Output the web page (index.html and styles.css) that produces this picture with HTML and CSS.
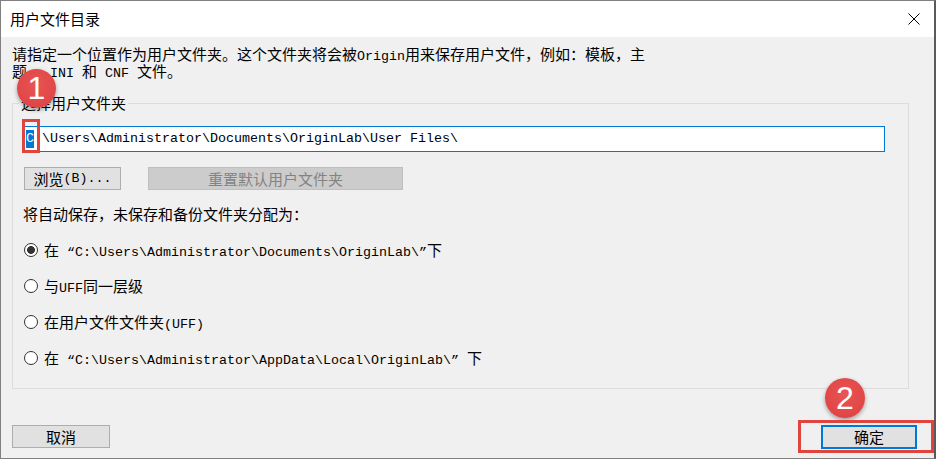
FILE: index.html
```html
<!DOCTYPE html>
<html lang="zh-CN">
<head>
<meta charset="utf-8">
<title>用户文件目录</title>
<link rel="stylesheet" href="styles.css">
</head>
<body>
<div class="window">
  <div class="titlebar">
    <span class="title">用户文件目录</span>
    <svg class="close" width="12" height="12" viewBox="0 0 12 12"><path d="M0.5 0.5 L11.5 11.5 M11.5 0.5 L0.5 11.5" stroke="#000" stroke-width="1" fill="none"/></svg>
  </div>
  <div class="content">
    <div class="desc">请指定一个位置作为用户文件夹。这个文件夹将会被<span class="m">Origin</span>用来保存用户文件，例如：模板，主<br>题、<span class="m"> INI </span>和<span class="m"> CNF </span>文件。</div>
    <fieldset class="group">
      <legend class="legend">选择用户文件夹</legend>
      <div class="pathbox"><span class="m"><span class="sel">C</span>:\Users\Administrator\Documents\OriginLab\User Files\</span></div>
      <div class="btnrow">
        <button class="btn browse">浏览<span class="m">(B)...</span></button>
        <button class="btn reset" disabled>重置默认用户文件夹</button>
      </div>
      <div class="label">将自动保存，未保存和备份文件夹分配为：</div>
      <div class="radios">
        <label class="radio"><input type="radio" name="loc" checked><span>在<span class="m"> “C:\Users\Administrator\Documents\OriginLab\”</span>下</span></label>
        <label class="radio"><input type="radio" name="loc"><span>与<span class="m">UFF</span>同一层级</span></label>
        <label class="radio"><input type="radio" name="loc"><span>在用户文件文件夹<span class="m">(UFF)</span></span></label>
        <label class="radio"><input type="radio" name="loc"><span>在<span class="m"> “C:\Users\Administrator\AppData\Local\OriginLab\” </span>下</span></label>
      </div>
    </fieldset>
    <div class="footer">
      <button class="btn cancel">取消</button>
      <button class="btn ok">确定</button>
    </div>
  </div>
  <div class="badge b1">1</div>
  <div class="mark m1"></div>
  <div class="badge b2">2</div>
  <div class="mark m2"></div>
</div>
</body>
</html>
```
FILE: styles.css
```css
html, body {
  margin: 0;
  padding: 0;
  background: #f0f0f0;
}
body {
  font-family: "Noto Sans CJK SC", "Noto Sans", sans-serif;
  font-size: 15px;
  line-height: 16px;
  color: #000;
}
.m {
  font-family: "Liberation Mono", "Noto Sans CJK SC", monospace;
  font-size: 13.333px;
  line-height: 12px;
  white-space: pre;
}
.window {
  position: relative;
  width: 936px;
  height: 459px;
  box-sizing: border-box;
  border: 1px solid #808080;
  border-right: 2px solid #5a5a5a;
  background: #f0f0f0;
  display: flex;
  flex-direction: column;
  overflow: hidden;
}
.titlebar {
  height: 36px;
  flex: none;
  background: #fff;
  display: flex;
  align-items: center;
  justify-content: space-between;
  padding: 0 14px 0 9px;
}
.title {
  font-size: 15px;
}
.close {
  display: block;
}
.content {
  flex: 1;
  padding: 9px 0 0 11px;
}
.desc {
  line-height: 16px;
}
.group {
  margin: 15px 0 0 0;
  width: 897px;
  box-sizing: border-box;
  border: 1px solid #dcdcdc;
  padding: 15px 23px 20px 11px;
  min-width: 0;
}
.legend {
  padding: 0 2px;
  margin-left: -5px;
  line-height: 16px;
}
.pathbox {
  height: 26px;
  box-sizing: border-box;
  border: 1px solid #0078d7;
  background: #fff;
  padding-left: 1px;
  display: flex;
  align-items: center;
}
.sel {
  background: #0078d7;
  color: #fff;
  display: inline-block;
  line-height: 18px;
}
.btnrow {
  margin-top: 15px;
  display: flex;
  gap: 27px;
}
.btn {
  font-family: "Noto Sans CJK SC", "Noto Sans", sans-serif;
  font-size: 15px;
  line-height: 16px;
  color: #000;
  background: #e1e1e1;
  border: 1px solid #adadad;
  height: 23px;
  box-sizing: border-box;
  padding: 0;
  display: flex;
  align-items: center;
  justify-content: center;
}
.browse {
  width: 97px;
}
.reset {
  width: 255px;
  background: #cccccc;
  border-color: #bfbfbf;
  color: #838383;
}
.label {
  margin-top: 16px;
  margin-left: -1px;
}
.radios {
  margin-top: 18px;
  display: flex;
  flex-direction: column;
  gap: 16px;
}
.radio {
  height: 20px;
  display: flex;
  align-items: center;
  gap: 6px;
}
.radio input {
  appearance: none;
  -webkit-appearance: none;
  margin: 0;
  width: 14px;
  height: 14px;
  box-sizing: border-box;
  border: 1px solid #333;
  border-radius: 50%;
  background: #fff;
  position: relative;
}
.radio input:checked {
  background: radial-gradient(circle, #333 0 3.6px, #fff 4.2px);
}
.footer {
  margin-top: 36px;
  padding-right: 17px;
  display: flex;
  justify-content: space-between;
}
.cancel {
  width: 98px;
  height: 23px;
}
.ok {
  width: 96px;
  height: 24px;
  border: 2px solid #0078d7;
}
.badge {
  position: absolute;
  width: 39px;
  height: 39px;
  border-radius: 50%;
  background: radial-gradient(circle at 50% 40%, #ea5454 0, #e04646 70%, #cf3c3c 100%);
  box-shadow: 0 2px 4px rgba(0, 0, 0, 0.35);
  color: #fff;
  font-family: "Liberation Sans", Arial, sans-serif;
  font-size: 32px;
  line-height: 39px;
  text-align: center;
}
.b1 {
  left: 16px;
  top: 68px;
}
.b2 {
  left: 824px;
  top: 377px;
  width: 40px;
  height: 40px;
  line-height: 40px;
}
.mark {
  position: absolute;
  box-sizing: border-box;
  border: 3px solid #e0443e;
}
.m1 {
  left: 21px;
  top: 118px;
  width: 18px;
  height: 34px;
}
.m2 {
  left: 797px;
  top: 419px;
  width: 136px;
  height: 33px;
}
```
